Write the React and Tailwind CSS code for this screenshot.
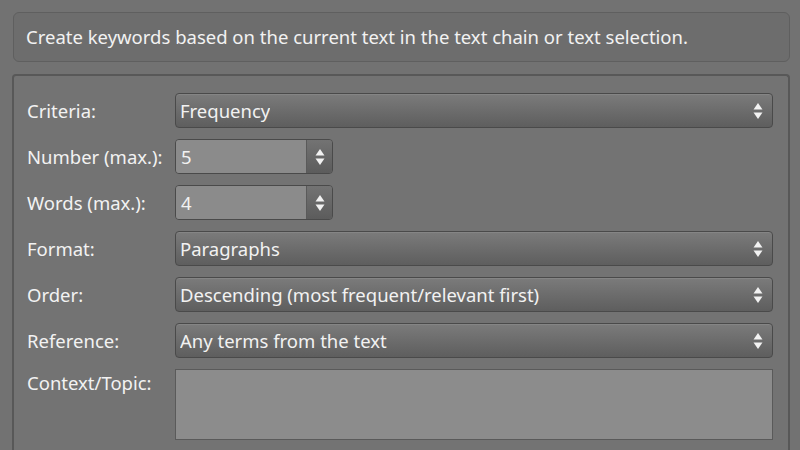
import React from "react";

function UpDown() {
  return (
    <svg width="10" height="18" viewBox="0 0 10 18" className="shrink-0">
      <path d="M5 1 L9.5 7.5 L0.5 7.5 Z" fill="#f2f2f2" />
      <path d="M5 17 L9.5 10.5 L0.5 10.5 Z" fill="#f2f2f2" />
    </svg>
  );
}

function Select({ value }) {
  return (
    <div className="flex-1 h-[35px] flex items-center justify-between pl-[4px] pr-[9px] rounded-[4px] border border-[#4a4a4a] bg-gradient-to-b from-[#7b7b7b] to-[#5e5e5e] shadow-[inset_0_1px_0_#858585]">
      <span className="truncate">{value}</span>
      <UpDown />
    </div>
  );
}

function Spin({ value }) {
  return (
    <div className="w-[158px] h-[35px] flex rounded-[4px] border border-[#4a4a4a] overflow-hidden">
      <div className="flex-1 bg-[#8b8b8b] flex items-center pl-[5px] border-r border-[#5a5a5a]">{value}</div>
      <div className="w-[25px] flex items-center justify-center bg-gradient-to-b from-[#737373] to-[#5c5c5c]">
        <UpDown />
      </div>
    </div>
  );
}

function Row({ label, children, top }) {
  return (
    <div className={`flex ${top ? "items-start" : "items-center"}`}>
      <div className={`w-[148px] shrink-0 ${top ? "pt-[2px]" : ""}`}>{label}</div>
      {children}
    </div>
  );
}

export default function App() {
  return (
    <div
      className="w-[800px] h-[450px] overflow-hidden bg-[#727272] text-[#f2f2f2] text-[18.5px] leading-[24px] pt-[12px] pl-[12px] pr-[10px]"
      style={{ fontFamily: '"Noto Sans", "DejaVu Sans", sans-serif' }}
    >
      <div className="ml-[1px] h-[50px] rounded-[6px] border border-[#5f5f5f] bg-[#6d6d6d] flex items-center pl-[12px]">
        Create keywords based on the current text in the text chain or text selection.
      </div>
      <div className="mt-[12px] h-[400px] rounded-t-[4px] border-2 border-b-0 border-[#585858] bg-[#737373] pt-[17px] pl-[13px] pr-[15px] flex flex-col gap-[11px]">
        <Row label="Criteria:"><Select value="Frequency" /></Row>
        <Row label="Number (max.):"><Spin value="5" /></Row>
        <Row label="Words (max.):"><Spin value="4" /></Row>
        <Row label="Format:"><Select value="Paragraphs" /></Row>
        <Row label="Order:"><Select value="Descending (most frequent/relevant first)" /></Row>
        <Row label="Reference:"><Select value="Any terms from the text" /></Row>
        <Row label="Context/Topic:" top>
          <div className="flex-1 h-[71px] border border-[#5a5a5a] bg-[#8c8c8c]" />
        </Row>
      </div>
    </div>
  );
}
